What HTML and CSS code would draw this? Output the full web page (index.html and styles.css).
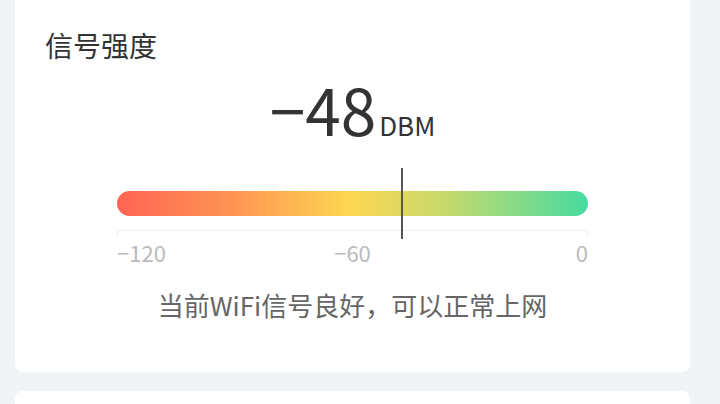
FILE: index.html
```html
<!DOCTYPE html>
<html lang="zh-CN">
<head>
    <meta charset="UTF-8">
    <meta name="viewport" content="width=device-width, initial-scale=1.0">
    <title>信号强度</title>
    <link rel="stylesheet" href="styles.css">
</head>
<body>

<div class="card signal-card">
    <h2 class="card-title">信号强度</h2>

    <div class="signal-value">
        <span class="value-number">−48</span><span class="value-unit">DBM</span>
    </div>

    <div class="gauge">
        <div class="gauge-bar"></div>
        <div class="gauge-axis"></div>
        <div class="gauge-marker" style="left: 60.5%;"></div>
        <div class="gauge-labels">
            <span class="label-min">−120</span>
            <span class="label-mid">−60</span>
            <span class="label-max">0</span>
        </div>
    </div>

    <p class="signal-status">当前WiFi信号良好，可以正常上网</p>
</div>

<div class="card"></div>

</body>
</html>
```

FILE: styles.css
```css
body {
    font-family: "Noto Sans CJK SC", "Noto Sans", sans-serif;
    background-color: #f1f4f6;
    margin: 0;
    padding: 0 30px 0 15px;
    overflow: hidden;
}
.card {
    background-color: #ffffff;
    border-radius: 8px;
    margin-bottom: 19px;
    height: 120px;
}
.signal-card {
    margin-top: -12px;
    height: auto;
    padding: 39px 30px 50px;
}
.card-title {
    margin: 0;
    font-size: 28px;
    line-height: 36px;
    font-weight: 400;
    color: #333333;
}
.signal-value {
    text-align: center;
    margin-top: 13px;
    line-height: 64px;
    color: #333333;
}
.value-number {
    font-size: 64px;
    font-weight: 400;
}
.value-unit {
    font-size: 26px;
    margin-left: 3px;
}
.gauge {
    position: relative;
    margin: 7px 72px 0;
    padding-top: 23px;
}
.gauge-bar {
    height: 25px;
    border-radius: 13px;
    background: linear-gradient(to right, #ff6453 0%, #fe9653 25%, #fdd651 49.5%, #c6d96d 70%, #45dca0 100%);
}
.gauge-axis {
    margin-top: 14px;
    height: 6px;
    border: 1px solid #eeeeee;
    border-bottom: none;
}
.gauge-marker {
    position: absolute;
    top: 0;
    width: 2px;
    height: 71px;
    margin-left: -1px;
    background-color: #555555;
}
.gauge-labels {
    display: grid;
    grid-template-columns: 1fr auto 1fr;
    margin-top: 3px;
    font-size: 22px;
    line-height: 24px;
    color: #bbbbbb;
}
.label-min {
    justify-self: start;
}
.label-mid {
    justify-self: center;
}
.label-max {
    justify-self: end;
}
.signal-status {
    margin: 24px 0 0;
    text-align: center;
    font-size: 26px;
    line-height: 34px;
    color: #666666;
}
```
